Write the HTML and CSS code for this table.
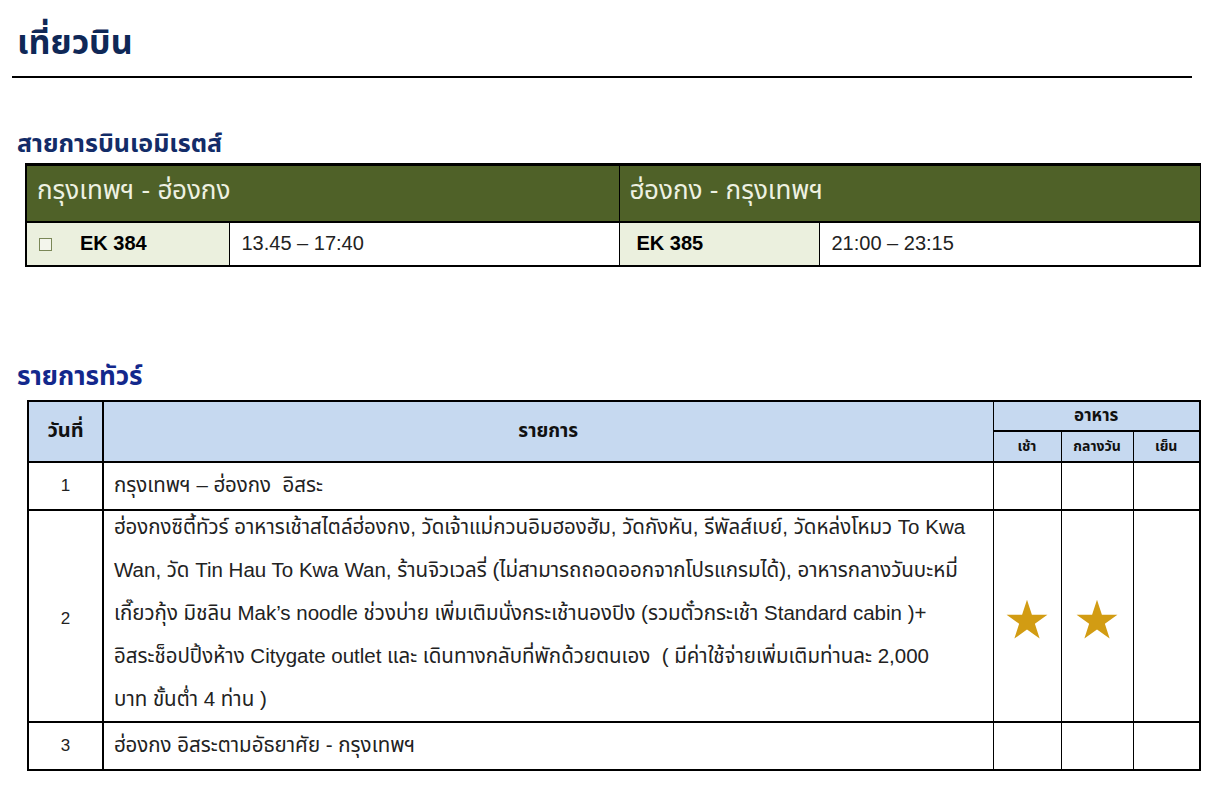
FILE: index.html
```html
<!DOCTYPE html>
<html lang="th">
<head>
<meta charset="utf-8">
<title>เที่ยวบิน</title>
<link rel="stylesheet" href="styles.css">
</head>
<body>
<div class="page">
  <h1 class="title">เที่ยวบิน</h1>
  <div class="rule"></div>

  <h2 class="airline">สายการบินเอมิเรตส์</h2>
  <table class="flights">
    <colgroup>
      <col class="c-code"><col class="c-time"><col class="c-code2"><col class="c-time2">
    </colgroup>
    <tr class="fhead">
      <th colspan="2">กรุงเทพฯ - ฮ่องกง</th>
      <th colspan="2">ฮ่องกง - กรุงเทพฯ</th>
    </tr>
    <tr class="frow">
      <td class="code"><span class="check"></span><span class="fno">EK 384</span></td>
      <td class="time">13.45 – 17:40</td>
      <td class="code"><span class="fno">EK 385</span></td>
      <td class="time">21:00 – 23:15</td>
    </tr>
  </table>

  <h2 class="tour-title">รายการทัวร์</h2>
  <table class="tour">
    <colgroup>
      <col class="t-day"><col class="t-prog"><col class="t-m1"><col class="t-m2"><col class="t-m3">
    </colgroup>
    <tr class="h1">
      <th rowspan="2" class="hday">วันที่</th>
      <th rowspan="2" class="hprog">รายการ</th>
      <th colspan="3" class="hmeal">อาหาร</th>
    </tr>
    <tr class="h2">
      <th class="hm">เช้า</th>
      <th class="hm">กลางวัน</th>
      <th class="hm">เย็น</th>
    </tr>
    <tr class="r-short">
      <td class="day">1</td>
      <td class="prog">กรุงเทพฯ – ฮ่องกง&nbsp; อิสระ</td>
      <td class="meal"></td><td class="meal"></td><td class="meal"></td>
    </tr>
    <tr class="r-long">
      <td class="day">2</td>
      <td class="prog long"><div class="long-text">ฮ่องกงซิตี้ทัวร์ อาหารเช้าสไตล์ฮ่องกง, วัดเจ้าแม่กวนอิมฮองฮัม, วัดกังหัน, รีพัลส์เบย์, วัดหล่งโหมว To Kwa<br>Wan, วัด Tin Hau To Kwa Wan, ร้านจิวเวลรี่ (ไม่สามารถถอดออกจากโปรแกรมได้), อาหารกลางวันบะหมี่<br>เกี๊ยวกุ้ง มิชลิน Mak’s noodle ช่วงบ่าย เพิ่มเติมนั่งกระเช้านองปิง (รวมตั๋วกระเช้า Standard cabin )+<br>อิสระช็อปปิ้งห้าง Citygate outlet และ เดินทางกลับที่พักด้วยตนเอง&nbsp; ( มีค่าใช้จ่ายเพิ่มเติมท่านละ 2,000<br>บาท ขั้นต่ำ 4 ท่าน )</div></td>
      <td class="meal"><svg class="star" viewBox="0 0 100 96" aria-hidden="true"><polygon points="50,2 61.8,37.6 99,37.6 68.9,59.6 80.3,95 50,73 19.7,95 31.1,59.6 1,37.6 38.2,37.6"/></svg></td>
      <td class="meal"><svg class="star" viewBox="0 0 100 96" aria-hidden="true"><polygon points="50,2 61.8,37.6 99,37.6 68.9,59.6 80.3,95 50,73 19.7,95 31.1,59.6 1,37.6 38.2,37.6"/></svg></td>
      <td class="meal"></td>
    </tr>
    <tr class="r-short">
      <td class="day">3</td>
      <td class="prog">ฮ่องกง อิสระตามอัธยาศัย - กรุงเทพฯ</td>
      <td class="meal"></td><td class="meal"></td><td class="meal"></td>
    </tr>
  </table>
</div>
</body>
</html>
```

FILE: styles.css
```css
* { box-sizing: border-box; }

html, body {
  margin: 0;
  padding: 0;
  background: #ffffff;
}

body {
  font-family: "Liberation Sans", "Noto Sans Thai", "Noto Sans", sans-serif;
  color: #111111;
}

.page {
  width: 1218px;
  padding-top: 22px;
}

.title {
  margin: 0 0 0 17px;
  font-size: 34px;
  line-height: 40px;
  font-weight: 700;
  color: #0f2857;
}

.rule {
  margin: 14px 0 0 12px;
  width: 1180px;
  height: 2px;
  background: #000000;
}

.airline {
  margin: 48px 0 0 17px;
  font-size: 25px;
  line-height: 34px;
  font-weight: 700;
  color: #132c68;
}

/* Flights table */
.flights {
  margin: 3px 0 0 25px;
  width: 1174px;
  border-collapse: collapse;
  table-layout: fixed;
}
.c-code { width: 203px; }
.c-time { width: 390px; }
.c-code2 { width: 200px; }
.c-time2 { width: 381px; }

.fhead th {
  height: 57px;
  background: #4f6128;
  color: #eef1e2;
  font-weight: 400;
  font-size: 26px;
  text-align: left;
  padding: 0 0 4px 10px;
  border-top: 3px solid #000;
  border-left: 1px solid #000;
  border-right: 1px solid #000;
  border-bottom: 2px solid #000;
}
.fhead th:first-child { border-left: 2px solid #000; }

.frow td {
  height: 44px;
  border: 1px solid #000;
  border-bottom: 2px solid #000;
  vertical-align: middle;
  padding: 0 0 0 12px;
}
.frow td:first-child { border-left: 2px solid #000; }
.frow td:last-child { border-right: 2px solid #000; }

.frow .code {
  background: #ebf0de;
}
.check {
  display: inline-block;
  width: 13px;
  height: 13px;
  border: 1px solid #7a8757;
  background: #f3f5ec;
  vertical-align: -1px;
  margin-right: 28px;
}
.fno {
  font-family: "Liberation Sans", sans-serif;
  font-weight: 700;
  font-size: 20px;
  color: #000;
}
.frow td:nth-child(3) { padding-left: 17px; }
.time {
  font-size: 20px;
  color: #222;
}

/* Tour section */
.tour-title {
  margin: 93px 0 0 17px;
  font-size: 26px;
  line-height: 32px;
  font-weight: 700;
  color: #13288c;
}

.tour {
  margin: 8px 0 0 27px;
  width: 1172px;
  border-collapse: collapse;
  table-layout: fixed;
  border: 2px solid #000;
}
.t-day { width: 75px; }
.t-prog { width: 890px; }
.t-m1 { width: 68px; }
.t-m2 { width: 72px; }
.t-m3 { width: 67px; }

.tour th {
  background: #c6d9f0;
  color: #111;
  font-weight: 700;
  border: 1px solid #000;
}
.tour .h1 th { height: 30px; font-size: 17px; }
.tour .h2 th { height: 31px; font-size: 14px; }
.hday { font-size: 20px !important; border-right: 2px solid #000 !important; }
.hprog { font-size: 19px !important; }
.hmeal { border-bottom: 2px solid #000 !important; }
.tour .h2 th { border-bottom: 2px solid #000; }
.tour .h1 th.hday, .tour .h1 th.hprog { border-bottom: 2px solid #000; }

.tour td {
  border: 1px solid #000;
  border-bottom: 2px solid #000;
  font-size: 20.5px;
  color: #222;
}
.r-short td { height: 48px; }
.r-long td { height: 212px; padding-top: 8px; }

.day {
  text-align: center;
  font-size: 17px !important;
  border-right: 2px solid #000 !important;
}
.prog {
  padding: 0 0 0 10px;
  white-space: nowrap;
}
.r-long td.prog.long {
  vertical-align: top;
  padding-top: 0;
}
.long-text {
  line-height: 43px;
  margin-top: -6px;
}
.meal {
  text-align: center;
  vertical-align: middle;
}
.star {
  display: block;
  margin: 0 auto;
  width: 42px;
  height: 40px;
  fill: #d29c13;
}
```
